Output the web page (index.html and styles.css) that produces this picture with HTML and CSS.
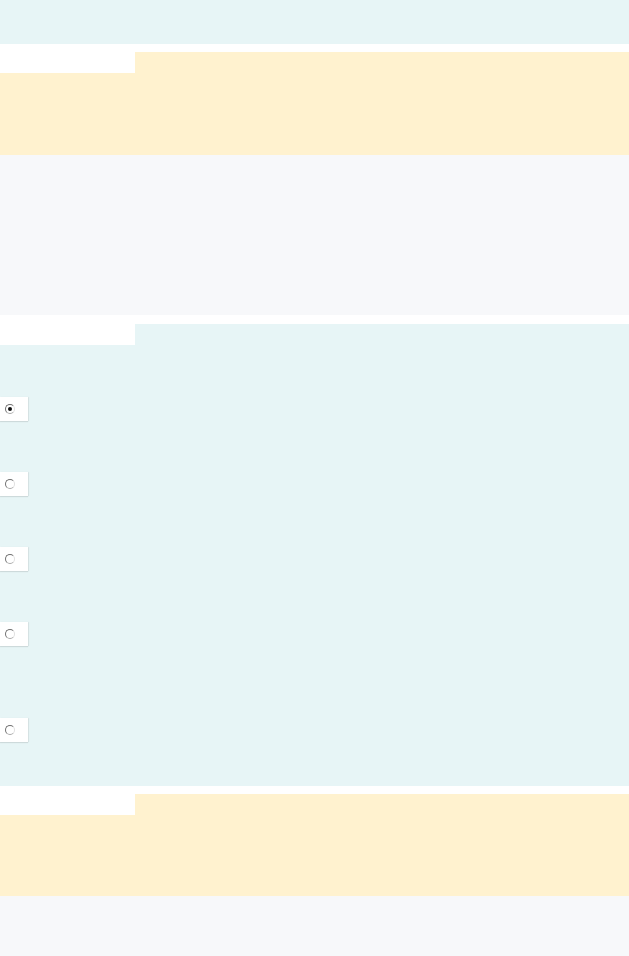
FILE: index.html
```html
<!DOCTYPE html>
<html lang="en">
<head>
<meta charset="utf-8">
<title>Form</title>
<link rel="stylesheet" href="styles.css">
</head>
<body>
<div class="page">
  <div class="band band-cyan band-top"></div>

  <section class="panel panel-yellow panel-q1">
    <div class="tab"></div>
  </section>

  <section class="panel panel-grey panel-info"></section>

  <section class="panel panel-cyan panel-options">
    <div class="tab"></div>
    <div class="options">
      <label class="option"><span class="opt-box"><input type="radio" name="q" checked></span></label>
      <label class="option"><span class="opt-box"><input type="radio" name="q"></span></label>
      <label class="option"><span class="opt-box"><input type="radio" name="q"></span></label>
      <label class="option"><span class="opt-box"><input type="radio" name="q"></span></label>
      <label class="option option-wide"><span class="opt-box"><input type="radio" name="q"></span></label>
    </div>
  </section>

  <section class="panel panel-yellow panel-q2">
    <div class="tab"></div>
  </section>

  <section class="panel panel-grey panel-bottom"></section>
</div>
</body>
</html>
```

FILE: styles.css
```css
html, body {
  margin: 0;
  padding: 0;
  background: #ffffff;
  font-family: "Liberation Sans", Arial, sans-serif;
}

.page {
  display: flex;
  flex-direction: column;
  width: 629px;
  min-height: 956px;
}

.band-top {
  height: 44px;
}

.band-cyan,
.panel-cyan {
  background: #e7f5f6;
}

.panel-yellow {
  background: #fff2cf;
}

.panel-grey {
  background: #f7f8fa;
}

.panel {
  display: flex;
  flex-direction: column;
}

.tab {
  width: 135px;
  height: 21px;
  background: #ffffff;
}

.panel-q1 {
  margin-top: 8px;
  height: 103px;
}

.panel-info {
  height: 160px;
}

.panel-options {
  margin-top: 9px;
  height: 462px;
}

.panel-q2 {
  margin-top: 8px;
  height: 102px;
}

.panel-bottom {
  flex: 1;
}

.options {
  display: flex;
  flex-direction: column;
  padding-top: 52px;
  gap: 51px;
}

.option {
  display: flex;
  align-items: center;
  height: 24px;
}

.option-wide {
  margin-top: 21px;
}

.opt-box {
  display: flex;
  align-items: center;
  width: 28px;
  height: 24px;
  padding-left: 5px;
  box-sizing: border-box;
  background: #ffffff;
  box-shadow: 0 1px 1px rgba(0, 0, 0, 0.10), 1px 0 1px rgba(0, 0, 0, 0.06);
}

.opt-box input {
  appearance: none;
  -webkit-appearance: none;
  margin: 0;
  width: 10px;
  height: 10px;
  border-radius: 50%;
  border: 1px solid;
  border-color: #6f6f6f #e0e0e0 #a8a8a8 #6f6f6f;
  background: #ffffff;
  box-sizing: border-box;
  display: grid;
  place-items: center;
}

.opt-box input:checked::before {
  content: "";
  width: 4px;
  height: 4px;
  border-radius: 50%;
  background: #111111;
}
```
